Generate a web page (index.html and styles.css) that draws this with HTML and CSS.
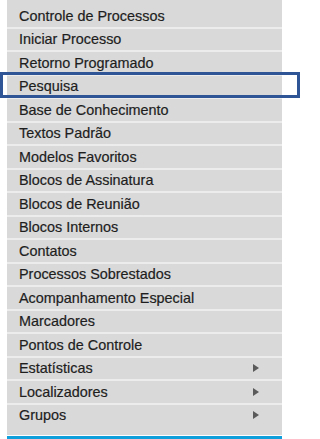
FILE: index.html
```html
<!DOCTYPE html>
<html lang="pt-BR">
<head>
<meta charset="utf-8">
<title>Menu</title>
<link rel="stylesheet" href="styles.css">
</head>
<body>
<nav class="menu">
  <ul class="menu-list">
    <li class="item">Controle de Processos</li>
    <li class="item">Iniciar Processo</li>
    <li class="item">Retorno Programado</li>
    <li class="item highlighted">Pesquisa<span class="focus-box"></span></li>
    <li class="item">Base de Conhecimento</li>
    <li class="item">Textos Padrão</li>
    <li class="item">Modelos Favoritos</li>
    <li class="item">Blocos de Assinatura</li>
    <li class="item">Blocos de Reunião</li>
    <li class="item">Blocos Internos</li>
    <li class="item">Contatos</li>
    <li class="item">Processos Sobrestados</li>
    <li class="item">Acompanhamento Especial</li>
    <li class="item">Marcadores</li>
    <li class="item">Pontos de Controle</li>
    <li class="item has-sub">Estatísticas<span class="arrow"></span></li>
    <li class="item has-sub">Localizadores<span class="arrow"></span></li>
    <li class="item has-sub">Grupos<span class="arrow"></span></li>
  </ul>
  <div class="menu-footer"></div>
</nav>
</body>
</html>
```

FILE: styles.css
```css
html, body {
  margin: 0;
  padding: 0;
  background: #ffffff;
}

body {
  font-family: "Liberation Sans", Arial, sans-serif;
  width: 300px;
  height: 439px;
  overflow: hidden;
}

.menu {
  margin-left: 7px;
  width: 275px;
}

.menu-list {
  list-style: none;
  margin: 0;
  padding: 5px 0 7px 0;
  background: #d9d9d9;
}

.item {
  position: relative;
  display: flex;
  align-items: center;
  justify-content: space-between;
  height: 21.5px;
  border-bottom: 2px solid #ececec;
  padding-left: 12px;
  padding-right: 23px;
  font-size: 14.4px;
  color: #1e1e1e;
  -webkit-text-stroke: 0.2px #1e1e1e;
  white-space: nowrap;
}

.item:last-child {
  border-bottom-color: #d9d9d9;
}

.arrow {
  width: 0;
  height: 0;
  border-left: 6px solid #5a5a5a;
  border-top: 4.5px solid transparent;
  border-bottom: 4.5px solid transparent;
}

.focus-box {
  position: absolute;
  top: -3.5px;
  bottom: -1px;
  left: -7px;
  right: -18px;
  border: 3px solid #2f5597;
  pointer-events: none;
}

.menu-footer {
  margin-top: 1px;
  height: 3px;
  background: #0fa0dc;
}
```
